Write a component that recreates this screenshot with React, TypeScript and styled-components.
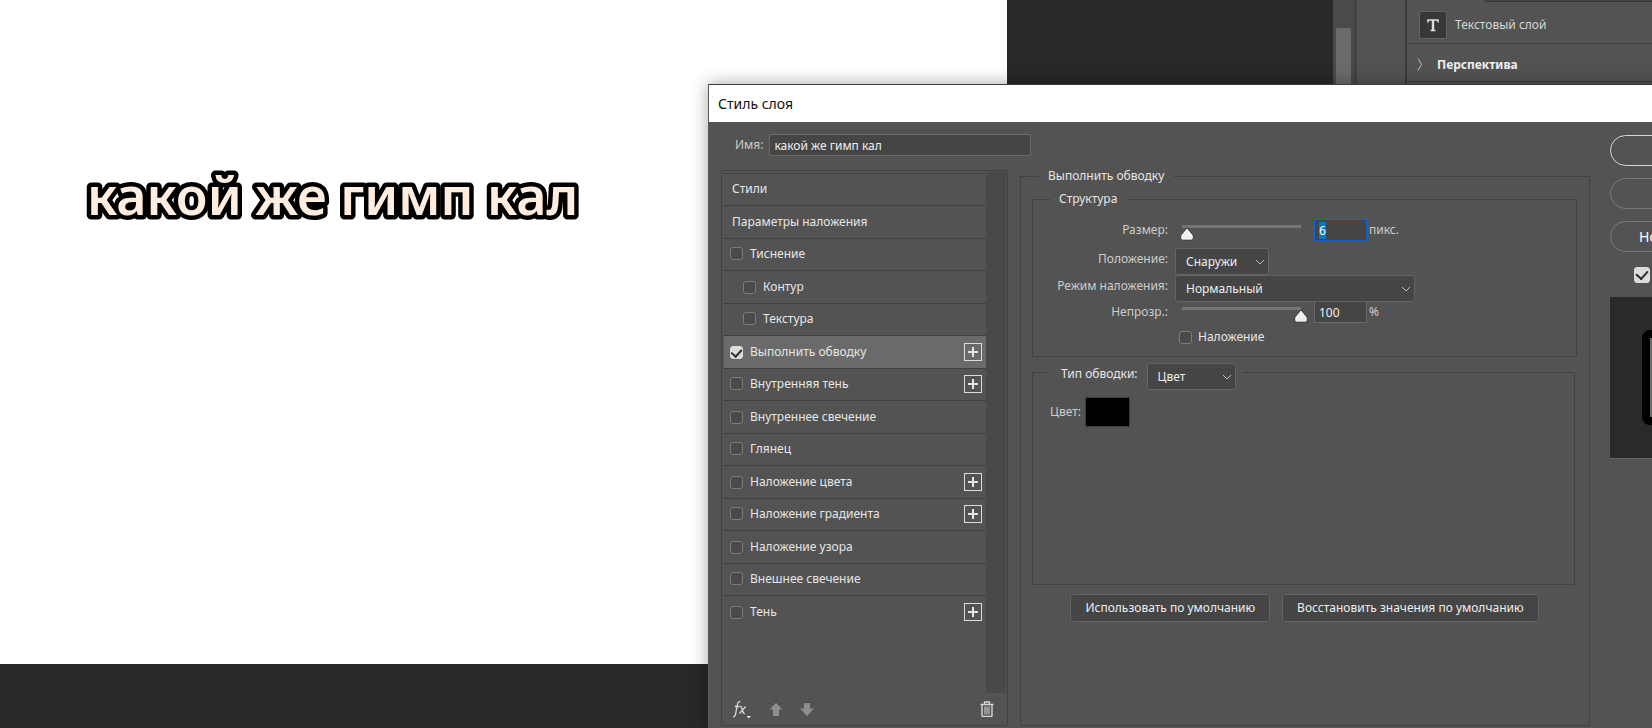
import React, { useEffect, useRef, useState } from "react";
import styled, { createGlobalStyle, css } from "styled-components";

const GlobalStyle = createGlobalStyle`
  * { box-sizing: border-box; }
  html, body, #root { height: 100%; }
  body {
    margin: 0;
    overflow: hidden;
    background: #282828;
    color: #e6e6e6;
    font: 12px/16px "Noto Sans", "Open Sans", sans-serif;
  }
  button, input, select { font: inherit; color: inherit; margin: 0; }
`;

const Workspace = styled.div`
  position: relative;
  display: flex;
  height: 100vh;
  overflow: hidden;
`;

const Canvas = styled.main`
  flex: 1;
  min-width: 0;
  padding-bottom: 64px;
`;

const Artboard = styled.div`
  width: 1007px;
  height: 100%;
  padding: 160px 0 0 80px;
  background: #fff;
`;

const Headline = styled.h1`
  margin: 0;
  font-size: 52px;
  font-weight: 600;
  line-height: 72px;
`;

const HeadlineText = styled.text`
  fill: #ffeee0;
  stroke: #000;
  stroke-width: 9px;
  stroke-linejoin: round;
  paint-order: stroke fill;
`;

const ScrollTrack = styled.div`
  width: 21px;
  padding: 28px 3px 0;
  background: #4a4a4a;
`;

const ScrollThumb = styled.div`
  height: 240px;
  border-radius: 2px;
  background: #6a6a6a;
`;

const Dock = styled.div`
  width: 51px;
  background: #535353;
  border-left: 3px solid #424242;
`;

const Properties = styled.aside`
  width: 247px;
  background: #535353;
  border-left: 2px solid #3b3b3b;
`;

const PanelTabs = styled.div`
  height: 2px;
  margin-left: 77px;
  background: #424242;
  border-bottom: 1px solid #383838;
`;

const LayerKind = styled.div`
  display: flex;
  align-items: center;
  gap: 8px;
  height: 42px;
  padding: 4px 0 0 12px;
  border-bottom: 1px solid #3d3d3d;
  color: #d6d6d6;
`;

const KindIcon = styled.span`
  display: grid;
  place-items: center;
  width: 28px;
  height: 28px;
  border: 1px solid #646464;
  border-radius: 2px;
  background: #383838;
`;

const Section = styled.button`
  display: flex;
  align-items: center;
  gap: 14px;
  width: 100%;
  height: 38px;
  padding: 4px 0 0 10px;
  border: 0;
  border-bottom: 1px solid #3d3d3d;
  background: none;
  font-weight: 700;
  color: #f0f0f0;
`;

const Dialog = styled.section`
  position: absolute;
  left: 708px;
  right: -119px;
  top: 84px;
  bottom: 0;
  display: flex;
  flex-direction: column;
  border: 1px solid #5c5c5c;
  border-top-color: #3c3c3c;
  border-bottom: 0;
  background: #535353;
  box-shadow: 0 0 16px rgba(0, 0, 0, 0.35);
`;

const TitleBar = styled.header`
  height: 37px;
  padding-left: 9px;
  background: #fff;
  color: #111;
  font-size: 14px;
  line-height: 38px;
`;

const DialogBody = styled.div`
  flex: 1;
  min-height: 0;
  display: flex;
  gap: 20px;
  padding: 12px 0 2px 12px;
`;

const MainArea = styled.div`
  flex: 1;
  min-width: 0;
  display: flex;
  flex-direction: column;
`;

const NameRow = styled.div`
  display: flex;
  align-items: center;
  gap: 6px;
  height: 22px;
  padding-left: 14px;
  color: #ccc;
`;

const fieldBox = css`
  border: 1px solid #6a6a6a;
  background: #454545;
  color: #eee;
  outline: none;
`;

const NameInput = styled.input`
  ${fieldBox}
  width: 262px;
  height: 22px;
  padding: 0 4px;
`;

const Columns = styled.div`
  flex: 1;
  min-height: 0;
  display: flex;
  gap: 12px;
  padding-top: 12px;
`;

const EffectsPanel = styled.div`
  width: 287px;
  margin-top: 2px;
  display: flex;
  flex-direction: column;
  border: 1px solid #424242;
  border-radius: 2px;
`;

const EffectsScroll = styled.div`
  flex: 1;
  min-height: 0;
  display: flex;
  padding: 1px 0 0 2px;
`;

const EffectsList = styled.ul`
  flex: 1;
  margin: 1px 0 0;
  padding: 0;
  list-style: none;
`;

const EffectsTrack = styled.div`
  width: 21px;
  border-right: 1px solid #505050;
  background: #494949;
`;

const EffectRow = styled.li<{ $active?: boolean; $indent?: boolean }>`
  display: flex;
  align-items: center;
  justify-content: space-between;
  height: 32px;
  padding: 0 4px 2px ${(p) => (p.$indent ? 19 : 6)}px;
  border-top: 1px solid #404040;
  background: ${(p) => (p.$active ? "#6a6a6a" : "none")};
  &:nth-child(even) { height: 33px; padding-bottom: 0; }
`;

const CheckLabel = styled.label`
  display: inline-flex;
  align-items: center;
  gap: 7px;
`;

const OverprintLabel = styled(CheckLabel)`
  gap: 6px;
  padding-left: 4px;
`;

const Heading = styled.span`
  padding-left: 2px;
`;

const Check = styled.input.attrs({ type: "checkbox" })<{ $large?: boolean }>`
  appearance: none;
  display: grid;
  place-items: center;
  width: ${(p) => (p.$large ? 16 : 13)}px;
  height: ${(p) => (p.$large ? 16 : 13)}px;
  border: 1px solid #7c7c7c;
  border-radius: 3px;
  background: #4a4a4a;
  &:checked { background: #dcdcdc; border-color: #dcdcdc; }
  &:checked::after {
    content: "";
    width: ${(p) => (p.$large ? 6 : 5)}px;
    height: ${(p) => (p.$large ? 9 : 8)}px;
    margin-bottom: 2px;
    border: solid #2b2b2b;
    border-width: 0 2px 2px 0;
    transform: rotate(42deg);
  }
`;

const AddButton = styled.button`
  display: grid;
  place-items: center;
  width: 18px;
  height: 18px;
  padding: 0;
  border: 1px solid #dcdcdc;
  background: none;
  color: #e4e4e4;
`;

const PanelFooter = styled.div`
  display: flex;
  align-items: center;
  gap: 17px;
  height: 32px;
  padding: 0 13px 0 10px;
`;

const ToolButton = styled.button<{ $last?: boolean }>`
  display: flex;
  padding: 0;
  border: 0;
  background: none;
  ${(p) => p.$last && "margin-left: auto;"}
`;

const Group = styled.fieldset<{ $grow?: boolean }>`
  min-width: 0;
  margin: 0;
  padding: 0;
  border: 1px solid #424242;
  ${(p) => p.$grow && "flex: 1;"}
`;

const Legend = styled.legend<{ $outer?: boolean }>`
  display: flex;
  height: 16px;
  margin-left: ${(p) => (p.$outer ? 7 : 17)}px;
  padding: 0 10px 0 9px;
  color: #e6e6e6;
`;

const StrokeGroup = styled(Group)`
  padding: 7px 12px 0 11px;
`;

const StructureGrid = styled.div`
  display: grid;
  grid-template-columns: 135px 1fr;
  column-gap: 7px;
  padding: 12px 0 11px;
`;

const FieldLabel = styled.label`
  padding-top: 3px;
  text-align: right;
  color: #ccc;
`;

const FieldCell = styled.div<{ $height: number }>`
  display: flex;
  align-items: flex-start;
  height: ${(p) => p.$height}px;
`;

const SliderBox = styled.div`
  position: relative;
  width: 133px;
  height: 22px;
  margin-right: 6px;
  padding: 6px 7px 0;
`;

const SliderLine = styled.div`
  height: 3px;
  background: #757575;
`;

const SliderHandle = styled.svg`
  position: absolute;
  top: 8px;
`;

const SliderInput = styled.input.attrs({ type: "range" })`
  position: absolute;
  inset: 0;
  width: 100%;
  opacity: 0;
`;

const NumberInput = styled.input<{ $focus?: boolean }>`
  ${fieldBox}
  width: 53px;
  height: 22px;
  padding: 0 4px;
  border-color: ${(p) => (p.$focus ? "#0a64dc" : "#6a6a6a")};
  &::selection { background: #0078d7; color: #fff; }
`;

const Unit = styled.span`
  padding: 3px 0 0 2px;
  color: #ccc;
`;

const SelectBox = styled.span<{ $width: number }>`
  position: relative;
  display: block;
  flex: none;
  width: ${(p) => p.$width}px;
  height: 27px;
`;

const Select = styled.select`
  appearance: none;
  display: block;
  width: 100%;
  height: 100%;
  padding: 0 24px 0 10px;
  border: 1px solid #646464;
  border-radius: 3px;
  background: #454545;
  color: #eee;
`;

const SelectArrow = styled.svg`
  position: absolute;
  right: 4px;
  top: 11px;
  pointer-events: none;
`;

const FillGroup = styled(Group)`
  height: 222px;
  margin: 6px 2px 0 0;
`;

const FillLegend = styled(Legend)`
  height: 18px;
  margin-left: 16px;
  padding: 0 7px 0 12px;
  gap: 9px;
  align-items: flex-start;
`;

const FillTypeLabel = styled.label`
  padding-top: 3px;
`;

const ColorRow = styled.div`
  display: flex;
  align-items: center;
  gap: 4px;
  padding: 16px 0 0 17px;
  color: #ccc;
`;

const Swatch = styled.button`
  width: 45px;
  height: 30px;
  border: 1px solid #3a3a3a;
  background: #000;
`;

const DefaultsRow = styled.div`
  display: flex;
  justify-content: center;
  gap: 12px;
  padding: 9px 0 0;
`;

const DefaultButton = styled.button`
  height: 28px;
  padding: 0 14px;
  border: 1px solid #626262;
  border-radius: 3px;
  background: #454545;
  color: #eee;
  white-space: nowrap;
`;

const Actions = styled.div`
  flex: none;
  width: 160px;
  display: flex;
  flex-direction: column;
  gap: 12px;
  padding-top: 1px;
`;

const ActionButton = styled.button<{ $primary?: boolean }>`
  height: 31px;
  padding: 0 0 0 28px;
  border: 1px solid ${(p) => (p.$primary ? "#d6d6d6" : "#7a7a7a")};
  border-radius: 16px;
  background: none;
  color: #fff;
  font-size: 14px;
  text-align: left;
`;

const PreviewToggle = styled(CheckLabel)`
  height: 21px;
  padding-left: 24px;
`;

const Preview = styled.div`
  height: 162px;
  padding: 33px 32px;
  border-bottom: 1px solid #666;
  background: #2a2a2a;
`;

const PreviewShape = styled.div`
  height: 95px;
  border: 8px solid #000;
  border-radius: 8px;
  background: #6a6a6a;
`;

type Effect = { name: string; plain?: boolean; indent?: boolean; on?: boolean; add?: boolean };

const effects: Effect[] = [
  { name: "Стили", plain: true },
  { name: "Параметры наложения", plain: true },
  { name: "Тиснение" },
  { name: "Контур", indent: true },
  { name: "Текстура", indent: true },
  { name: "Выполнить обводку", on: true, add: true },
  { name: "Внутренняя тень", add: true },
  { name: "Внутреннее свечение" },
  { name: "Глянец" },
  { name: "Наложение цвета", add: true },
  { name: "Наложение градиента", add: true },
  { name: "Наложение узора" },
  { name: "Внешнее свечение" },
  { name: "Тень", add: true },
];

function EffectItem({ effect }: { effect: Effect }) {
  return (
    <EffectRow $active={effect.on} $indent={effect.indent}>
      {effect.plain ? (
        <Heading>{effect.name}</Heading>
      ) : (
        <CheckLabel>
          <Check defaultChecked={effect.on} />
          {effect.name}
        </CheckLabel>
      )}
      {effect.add && (
        <AddButton aria-label={`Добавить: ${effect.name}`}>
          <svg width="10" height="10" viewBox="0 0 10 10">
            <path d="M5 0v10M0 5h10" stroke="currentColor" strokeWidth="2" />
          </svg>
        </AddButton>
      )}
    </EffectRow>
  );
}

function Dropdown({ id, width, options }: { id: string; width: number; options: string[] }) {
  return (
    <SelectBox $width={width}>
      <Select id={id}>
        {options.map((o) => (
          <option key={o}>{o}</option>
        ))}
      </Select>
      <SelectArrow width="10" height="7" viewBox="0 0 10 7" fill="none" stroke="#bdbdbd">
        <path d="M1 1l4 4 4-4" />
      </SelectArrow>
    </SelectBox>
  );
}

type SliderProps = { label: string; value: number; min: number; max: number; onChange: (v: number) => void };

function Slider({ label, value, min, max, onChange }: SliderProps) {
  const ratio = (value - min) / (max - min);
  return (
    <SliderBox>
      <SliderLine />
      <SliderHandle
        width="14"
        height="14"
        viewBox="0 0 14 14"
        style={{ left: `calc((100% - 14px) * ${ratio})` }}
      >
        <path
          d="M7 .8L12.6 7.600q.7.900.7 2v1.600q0 2-2 2H2.700q-2 0-2-2V9.600q0-1.100.7-2z"
          fill="#f0f0f0"
          stroke="#333"
        />
      </SliderHandle>
      <SliderInput
        aria-label={label}
        min={min}
        max={max}
        value={value}
        onChange={(e) => onChange(Number(e.target.value))}
      />
    </SliderBox>
  );
}

export default function App() {
  const [size, setSize] = useState(6);
  const [opacity, setOpacity] = useState(100);
  const sizeRef = useRef<HTMLInputElement>(null);

  useEffect(() => {
    sizeRef.current?.focus();
    sizeRef.current?.select();
  }, []);

  return (
    <>
      <GlobalStyle />
      <Workspace>
        <Canvas>
          <Artboard>
            <Headline>
              <svg width="540" height="80">
                <HeadlineText x="7" y="55">
                  какой же гимп кал
                </HeadlineText>
              </svg>
            </Headline>
          </Artboard>
        </Canvas>
        <ScrollTrack>
          <ScrollThumb />
        </ScrollTrack>
        <Dock />
        <Properties>
          <PanelTabs />
          <LayerKind>
            <KindIcon>
              <svg width="14" height="14" viewBox="0 0 14 14" fill="none" stroke="#dedede">
                <path d="M2 4.500V2h10v2.500M4.500 12.500h5" strokeWidth="1.500" />
                <path d="M7 2v10.500" strokeWidth="2.400" />
              </svg>
            </KindIcon>
            Текстовый слой
          </LayerKind>
          <Section>
            <svg width="6" height="13" viewBox="0 0 6 13" fill="none" stroke="#bdbdbd">
              <path d="M1 .5l3.500 6-3.500 6" />
            </svg>
            Перспектива
          </Section>
        </Properties>

        <Dialog role="dialog" aria-labelledby="dialog-title">
          <TitleBar id="dialog-title">Стиль слоя</TitleBar>
          <DialogBody>
            <MainArea>
              <NameRow>
                <label htmlFor="layer-name">Имя:</label>
                <NameInput id="layer-name" defaultValue="какой же гимп кал" />
              </NameRow>
              <Columns>
                <EffectsPanel>
                  <EffectsScroll>
                    <EffectsList>
                      {effects.map((e) => (
                        <EffectItem key={e.name} effect={e} />
                      ))}
                    </EffectsList>
                    <EffectsTrack />
                  </EffectsScroll>
                  <PanelFooter>
                    <ToolButton aria-label="Эффекты">
                      <svg width="20" height="20" viewBox="0 0 20 20" fill="none" stroke="#d6d6d6">
                        <path d="M1 17.500q2 .5 2.600-2.500L5.500 5Q6 2.200 8.500 2.700M2.800 7.500h4.700" strokeWidth="1.300" />
                        <path d="M7.800 7.500q1.500-.3 2 1.500l1.400 4.500q.4 1.300 1.800 1M13.800 7.500L7.500 14.500" strokeWidth="1.300" />
                        <path d="M14.500 17h4.500l-2.250 2.500z" fill="#e8e8e8" stroke="none" />
                      </svg>
                    </ToolButton>
                    <ToolButton aria-label="Вверх">
                      <svg width="14" height="14" viewBox="0 0 14 14">
                        <path d="M7 0l7 7.500h-4V14H4V7.500H0z" fill="#8e8e8e" />
                        <path d="M0 7.500L7 0l7 7.500" fill="none" stroke="#444" />
                      </svg>
                    </ToolButton>
                    <ToolButton aria-label="Вниз">
                      <svg width="14" height="14" viewBox="0 0 14 14">
                        <path d="M7 14l7-7.500h-4V0H4v6.500H0z" fill="#8e8e8e" />
                        <path d="M4 .5h6" stroke="#444" />
                      </svg>
                    </ToolButton>
                    <ToolButton $last aria-label="Удалить">
                      <svg width="14" height="16" viewBox="0 0 14 16" fill="none" stroke="#d6d6d6">
                        <path d="M.5 3.500h13M4.500 3V1h5v2M2 3.500v11q0 1 1 1h8q1 0 1-1v-11" strokeWidth="1.400" />
                        <path d="M5 5.500v8M7 5.500v8M9 5.500v8" />
                      </svg>
                    </ToolButton>
                  </PanelFooter>
                </EffectsPanel>

                <StrokeGroup $grow>
                  <Legend $outer>Выполнить обводку</Legend>
                  <Group>
                    <Legend>Структура</Legend>
                    <StructureGrid>
                      <FieldLabel htmlFor="size">Размер:</FieldLabel>
                      <FieldCell $height={29}>
                        <Slider label="Размер" value={size} min={0} max={130} onChange={setSize} />
                        <NumberInput
                          id="size"
                          ref={sizeRef}
                          $focus
                          value={size}
                          onChange={(e) => setSize(Number(e.target.value) || 0)}
                        />
                        <Unit>пикс.</Unit>
                      </FieldCell>
                      <FieldLabel htmlFor="position">Положение:</FieldLabel>
                      <FieldCell $height={27}>
                        <Dropdown id="position" width={94} options={["Снаружи", "Внутри", "По центру"]} />
                      </FieldCell>
                      <FieldLabel htmlFor="blend">Режим наложения:</FieldLabel>
                      <FieldCell $height={26}>
                        <Dropdown id="blend" width={240} options={["Нормальный", "Умножение", "Экран"]} />
                      </FieldCell>
                      <FieldLabel htmlFor="opacity">Непрозр.:</FieldLabel>
                      <FieldCell $height={28}>
                        <Slider label="Непрозрачность" value={opacity} min={0} max={100} onChange={setOpacity} />
                        <NumberInput
                          id="opacity"
                          value={opacity}
                          onChange={(e) => setOpacity(Number(e.target.value) || 0)}
                        />
                        <Unit>%</Unit>
                      </FieldCell>
                      <span />
                      <OverprintLabel>
                        <Check />
                        Наложение
                      </OverprintLabel>
                    </StructureGrid>
                  </Group>
                  <FillGroup>
                    <FillLegend>
                      <FillTypeLabel htmlFor="fill-type">Тип обводки:</FillTypeLabel>
                      <Dropdown id="fill-type" width={89} options={["Цвет", "Градиент", "Узор"]} />
                    </FillLegend>
                    <ColorRow>
                      <label htmlFor="stroke-color">Цвет:</label>
                      <Swatch id="stroke-color" />
                    </ColorRow>
                  </FillGroup>
                  <DefaultsRow>
                    <DefaultButton>Использовать по умолчанию</DefaultButton>
                    <DefaultButton>Восстановить значения по умолчанию</DefaultButton>
                  </DefaultsRow>
                </StrokeGroup>
              </Columns>
            </MainArea>

            <Actions>
              <ActionButton $primary aria-label="Да" />
              <ActionButton aria-label="Отмена" />
              <ActionButton>Новый стиль...</ActionButton>
              <PreviewToggle>
                <Check $large defaultChecked aria-label="Просмотр" />
              </PreviewToggle>
              <Preview>
                <PreviewShape />
              </Preview>
            </Actions>
          </DialogBody>
        </Dialog>
      </Workspace>
    </>
  );
}
